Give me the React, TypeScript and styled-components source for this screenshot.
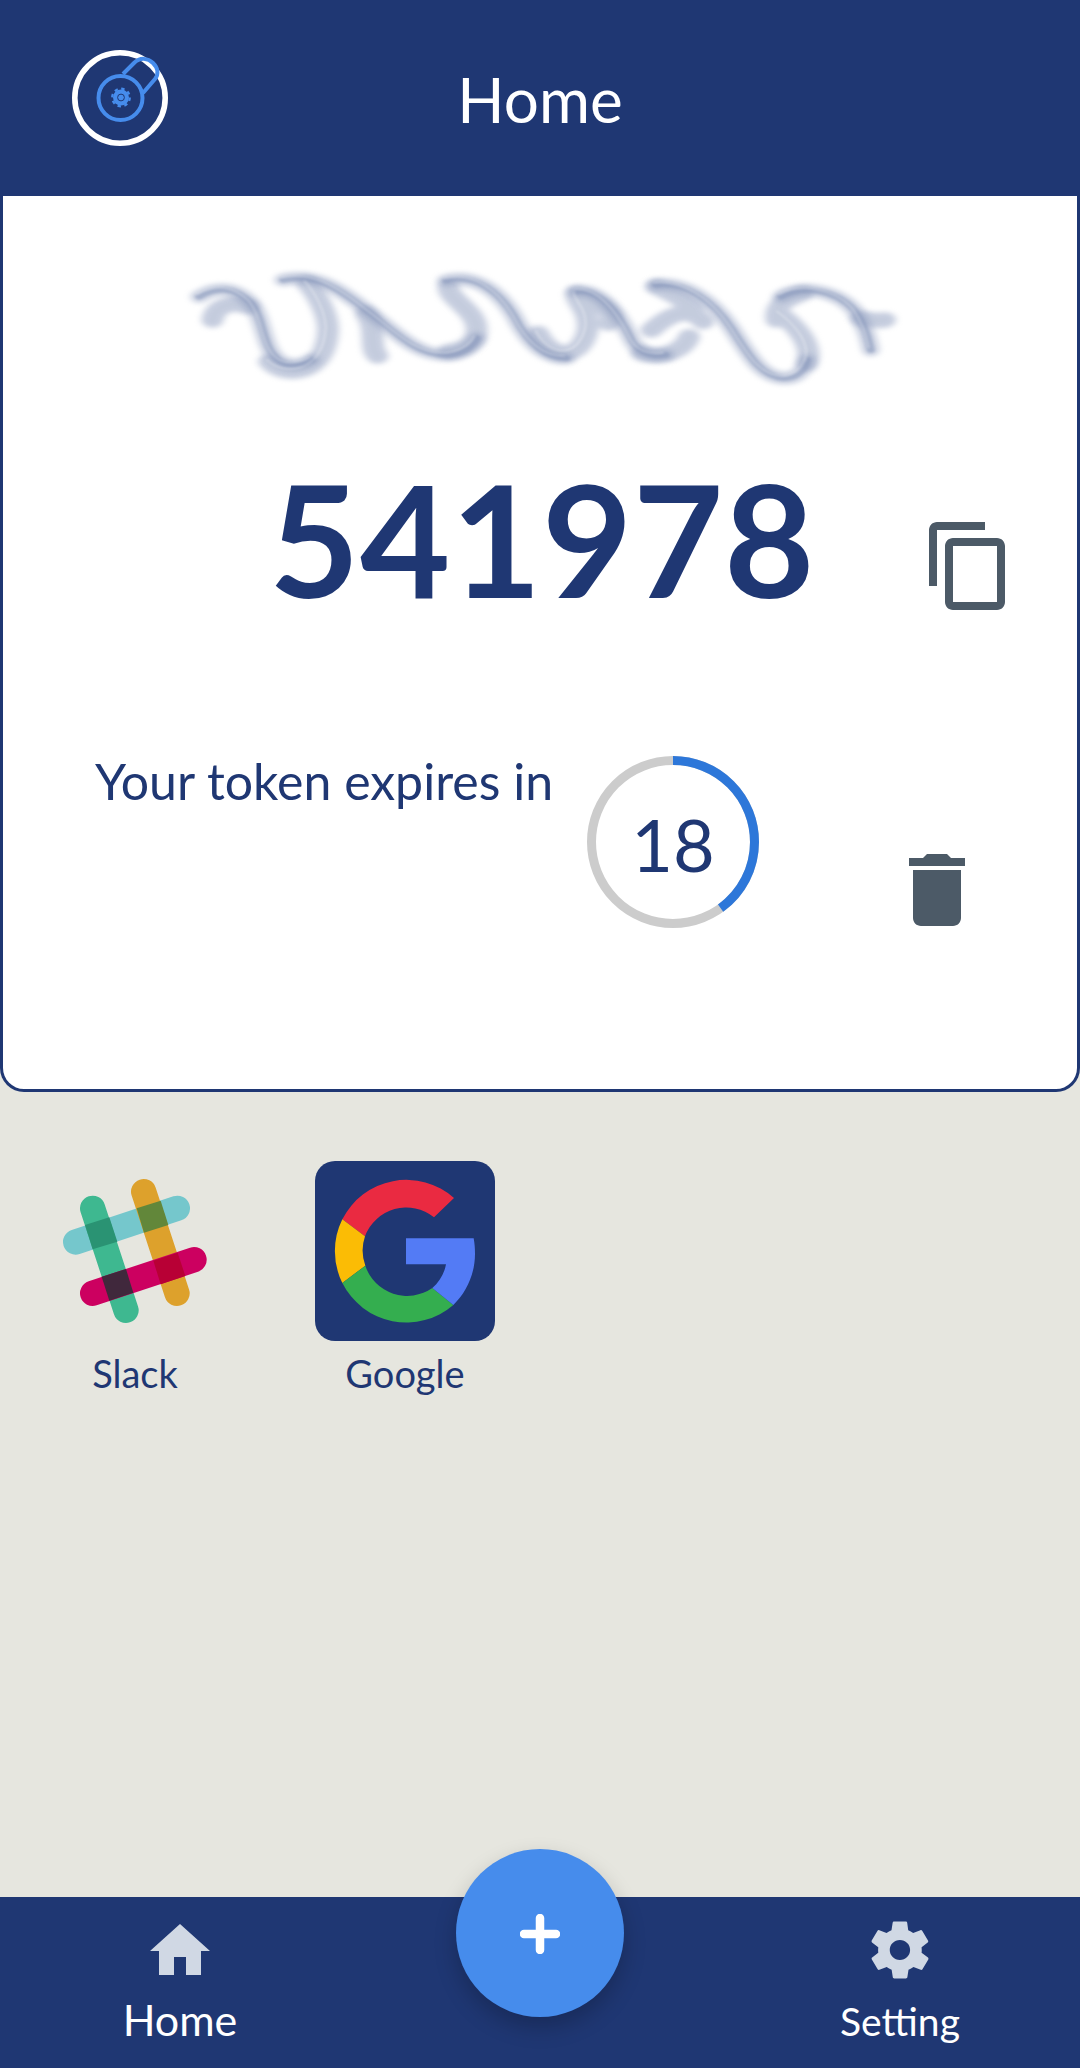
import React from "react";
import styled, { createGlobalStyle } from "styled-components";
import { MdContentCopy, MdDelete, MdHome } from "react-icons/md";
import { IoMdSettings } from "react-icons/io";

const NAVY = "#1f3773";
const BLUE = "#468cec";
const SLATE = "#4c5a67";

const GlobalStyle = createGlobalStyle`
  html, body {
    margin: 0;
    padding: 0;
    background: #e6e6df;
    font-family: "Lato", "Open Sans", sans-serif;
  }
  * {
    box-sizing: border-box;
  }
`;

const Page = styled.div`
  width: 1080px;
  height: 2068px;
  display: flex;
  flex-direction: column;
  overflow: hidden;
`;

const Header = styled.header`
  flex: 0 0 196px;
  background: ${NAVY};
  display: grid;
  grid-template-columns: 1fr auto 1fr;
  align-items: center;
  padding: 0 0 0 70px;
`;

const Title = styled.h1`
  margin: 2px 0 0;
  color: #fff;
  font-size: 62px;
  font-weight: 400;
  line-height: 72px;
  position: relative;
  left: -35px;
`;

const Card = styled.section`
  height: 896px;
  background: #fff;
  border: 3px solid ${NAVY};
  border-top: 0;
  border-radius: 0 0 24px 24px;
  padding-top: 54px;
`;

const Wave = styled.svg`
  display: block;
  margin-left: 167px;
  width: 740px;
  height: 150px;
`;

const CodeRow = styled.div`
  display: flex;
  align-items: flex-start;
  margin-top: 52px;
  padding-left: 266px;
`;

const Code = styled.div`
  width: 652px;
  color: ${NAVY};
  font-size: 156px;
  font-weight: 700;
  line-height: 172px;
  letter-spacing: 0.5px;
`;

const CopyIcon = styled(MdContentCopy)`
  color: ${SLATE};
  margin-top: 66px;
`;

const TokenRow = styled.div`
  display: flex;
  align-items: flex-start;
  margin-top: 132px;
  padding-left: 92px;
`;

const TokenText = styled.div`
  width: 492px;
  color: ${NAVY};
  font-size: 50px;
  line-height: 50px;
`;

const Timer = styled.div`
  position: relative;
  width: 172px;
  height: 172px;
`;

const TimerValue = styled.div`
  position: absolute;
  inset: 0;
  display: flex;
  align-items: center;
  justify-content: center;
  padding-top: 4px;
  color: ${NAVY};
  font-size: 72px;
  font-weight: 400;
`;

const TrashIcon = styled(MdDelete)`
  color: ${SLATE};
  margin: 86px 0 0 130px;
`;

const Apps = styled.div`
  flex: 1;
  display: flex;
  align-items: flex-start;
  padding-top: 69px;
`;

const AppItem = styled.div`
  width: 270px;
  display: flex;
  flex-direction: column;
  align-items: center;
`;

const AppIcon = styled.svg<{ $tile?: boolean }>`
  width: 180px;
  height: 180px;
  display: block;
  border-radius: 20px;
  background: ${(props) => (props.$tile ? NAVY : "transparent")};
`;

const AppName = styled.div`
  margin-top: 10px;
  color: ${NAVY};
  font-size: 38px;
  line-height: 44px;
`;

const BottomNav = styled.nav`
  position: relative;
  flex: 0 0 171px;
  background: ${NAVY};
  display: grid;
  grid-template-columns: repeat(3, 360px);
`;

const NavItem = styled.div<{ $col: number }>`
  grid-column: ${(props) => props.$col};
  display: flex;
  flex-direction: column;
  align-items: center;
  padding-top: 18px;
  color: #d0d8e4;
`;

const NavLabel = styled.div<{ $size: number; $gap: number }>`
  margin-top: ${(props) => props.$gap}px;
  color: #fff;
  font-size: ${(props) => props.$size}px;
  line-height: 50px;
`;

const Fab = styled.button`
  position: absolute;
  left: 456px;
  top: -48px;
  width: 168px;
  height: 168px;
  border: 0;
  border-radius: 50%;
  background: ${BLUE};
  box-shadow: 0 10px 22px rgba(0, 0, 0, 0.22);
  display: flex;
  align-items: flex-start;
  justify-content: center;
  padding: 65px 0 0;
`;

// the right-hand falls of the wave are crisp, the rising parts are smoky
const falls = [
  "M62 140 C100 108 140 112 172 160 C202 210 195 300 235 335 C255 350 280 345 300 330",
  "M240 90 C300 70 350 105 420 185 C470 235 520 320 590 315 C615 312 640 295 650 265",
  "M585 92 C650 70 700 130 730 200 C755 270 790 325 840 325",
  "M860 125 C910 115 950 190 975 260 C990 310 1020 322 1050 315",
  "M1030 105 C1090 95 1150 150 1190 235 C1225 310 1250 380 1300 385 C1325 385 1345 365 1350 330",
  "M1295 140 C1340 105 1410 120 1450 180 C1475 230 1480 270 1485 300",
];

const rises = [
  "M210 335 C240 385 330 380 335 240 C335 190 310 130 290 100",
  "M90 210 C95 170 130 150 165 170",
  "M415 190 C440 240 420 290 440 318",
  "M590 110 C590 150 650 180 650 240 C650 280 620 300 590 305",
  "M780 250 C810 330 870 330 885 240 C890 180 860 160 860 130",
  "M880 140 C920 170 945 190 930 220",
  "M1000 310 C1040 330 1090 300 1100 260",
  "M1020 240 C1060 190 1100 170 1130 215",
  "M1030 110 C1060 130 1090 150 1110 180",
  "M1285 210 C1280 170 1300 150 1340 130",
  "M1350 340 C1365 280 1320 220 1290 190",
  "M1465 205 C1490 212 1505 212 1515 210",
];

/** Smoky wave standing in for the blurred signature image in the card. */
function WaveArt() {
  return (
    <Wave viewBox="0 0 1568 450" preserveAspectRatio="none">
      <defs>
        <filter id="soft" filterUnits="userSpaceOnUse" x="0" y="0" width="1568" height="450">
          <feGaussianBlur stdDeviation="8" />
        </filter>
        <filter id="mid" filterUnits="userSpaceOnUse" x="0" y="0" width="1568" height="450">
          <feGaussianBlur stdDeviation="3" />
        </filter>
      </defs>
      <g fill="none" strokeLinecap="round">
        <g filter="url(#soft)" stroke="#8b9abd" strokeWidth="46" opacity="0.5">
          {rises.map((d) => (
            <path key={d} d={d} />
          ))}
        </g>
        <g filter="url(#soft)" stroke="#8b9abd" strokeWidth="36" opacity="0.5">
          {falls.map((d) => (
            <path key={d} d={d} />
          ))}
        </g>
        <g filter="url(#mid)" stroke="#8797bb" strokeWidth="16" opacity="0.5">
          {falls.map((d) => (
            <path key={d} d={d} />
          ))}
        </g>
        <g filter="url(#mid)" stroke="#fff" strokeWidth="3" opacity="0.5" transform="translate(-5 -7)">
          {falls.concat(rises[0], rises[4], rises[10]).map((d) => (
            <path key={d} d={d} />
          ))}
        </g>
      </g>
    </Wave>
  );
}

function Logo() {
  return (
    <svg width="100" height="100" viewBox="0 0 100 100" fill="none">
      <circle cx="50" cy="50" r="45.2" stroke="#fff" strokeWidth="5.6" />
      <circle cx="50.5" cy="50" r="22" stroke={BLUE} strokeWidth="4" />
      <path
        d="M53 26 L64 15 C70 9 78 10 83 15 C88 20 89 26 85 31 L73 45"
        stroke={BLUE}
        strokeWidth="4"
      />
      <circle cx="51" cy="49.5" r="8" fill={BLUE} />
      <circle cx="51" cy="49.5" r="8.8" stroke={BLUE} strokeWidth="2.2" strokeDasharray="3.4 3.5" />
      <circle cx="51" cy="49.5" r="3.4" fill={BLUE} stroke={NAVY} strokeWidth="1" />
    </svg>
  );
}

function TimerRing({ left, total }: { left: number; total: number }) {
  const r = 81.5;
  const circ = 2 * Math.PI * r;
  const blue = ((total - left) / total) * circ;
  return (
    <svg width="172" height="172" viewBox="0 0 172 172" fill="none">
      <circle cx="86" cy="86" r={r} stroke="#cccccc" strokeWidth="9" />
      <circle
        cx="86"
        cy="86"
        r={r}
        stroke="#2d77d9"
        strokeWidth="9"
        strokeDasharray={`${blue} ${circ}`}
        transform="rotate(-90 86 86)"
      />
    </svg>
  );
}

function SlackLogo() {
  return (
    <AppIcon viewBox="45 63 540 540">
      <g fill="none" strokeWidth="76" strokeLinecap="round">
        <path d="M137 306 L442 205" stroke="#75c7cc" />
        <path d="M188 205 L288 511" stroke="#3eb890" />
        <path d="M341 155 L441 460" stroke="#dda12c" />
        <path d="M188 460 L492 359" stroke="#cc0060" />
      </g>
      <polygon points="165,255 238,232 262,305 188,328" fill="#2a9373" />
      <polygon points="320,205 392,182 415,255 342,278" fill="#62873a" />
      <polygon points="370,362 443,338 466,408 392,433" fill="#b80035" />
      <polygon points="215,410 288,387 310,458 238,482" fill="#40283c" />
    </AppIcon>
  );
}

function GoogleLogo() {
  return (
    <AppIcon $tile viewBox="855 62 540 540">
      <path d="M1272 173 A215 215 0 0 0 937 237 L1005 288 A132 132 0 0 1 1212 231 Z" fill="#ea2a41" />
      <path d="M937 237 A215 215 0 0 0 937 428 L1006 376 A132 132 0 0 1 1005 288 Z" fill="#fbbc05" />
      <path d="M937 428 A215 215 0 0 0 1270 494 L1207 443 A132 132 0 0 1 1006 376 Z" fill="#34ae4f" />
      <path d="M1128 294 H1331 C1334 310 1335 325 1335 340 C1335 400 1310 455 1270 494 L1207 443 C1228 425 1243 400 1248 372 H1128 Z" fill="#537bf5" />
    </AppIcon>
  );
}

export default function App() {
  return (
    <Page>
      <GlobalStyle />
      <Header>
        <Logo />
        <Title>Home</Title>
      </Header>
      <Card>
        <WaveArt />
        <CodeRow>
          <Code>541978</Code>
          <CopyIcon size={96} />
        </CodeRow>
        <TokenRow>
          <TokenText>Your token expires in</TokenText>
          <Timer>
            <TimerRing left={18} total={30} />
            <TimerValue>18</TimerValue>
          </Timer>
          <TrashIcon size={96} />
        </TokenRow>
      </Card>
      <Apps>
        <AppItem>
          <SlackLogo />
          <AppName>Slack</AppName>
        </AppItem>
        <AppItem>
          <GoogleLogo />
          <AppName>Google</AppName>
        </AppItem>
      </Apps>
      <BottomNav>
        <NavItem $col={1}>
          <MdHome size={72} />
          <NavLabel $size={43} $gap={8}>Home</NavLabel>
        </NavItem>
        <NavItem $col={3}>
          <IoMdSettings size={70} />
          <NavLabel $size={39} $gap={11}>Setting</NavLabel>
        </NavItem>
        <Fab aria-label="Add">
          <svg width="40" height="40" viewBox="0 0 40 40">
            <path d="M20 4 V36 M4 20 H36" stroke="#fff" strokeWidth="8.5" strokeLinecap="round" />
          </svg>
        </Fab>
      </BottomNav>
    </Page>
  );
}
